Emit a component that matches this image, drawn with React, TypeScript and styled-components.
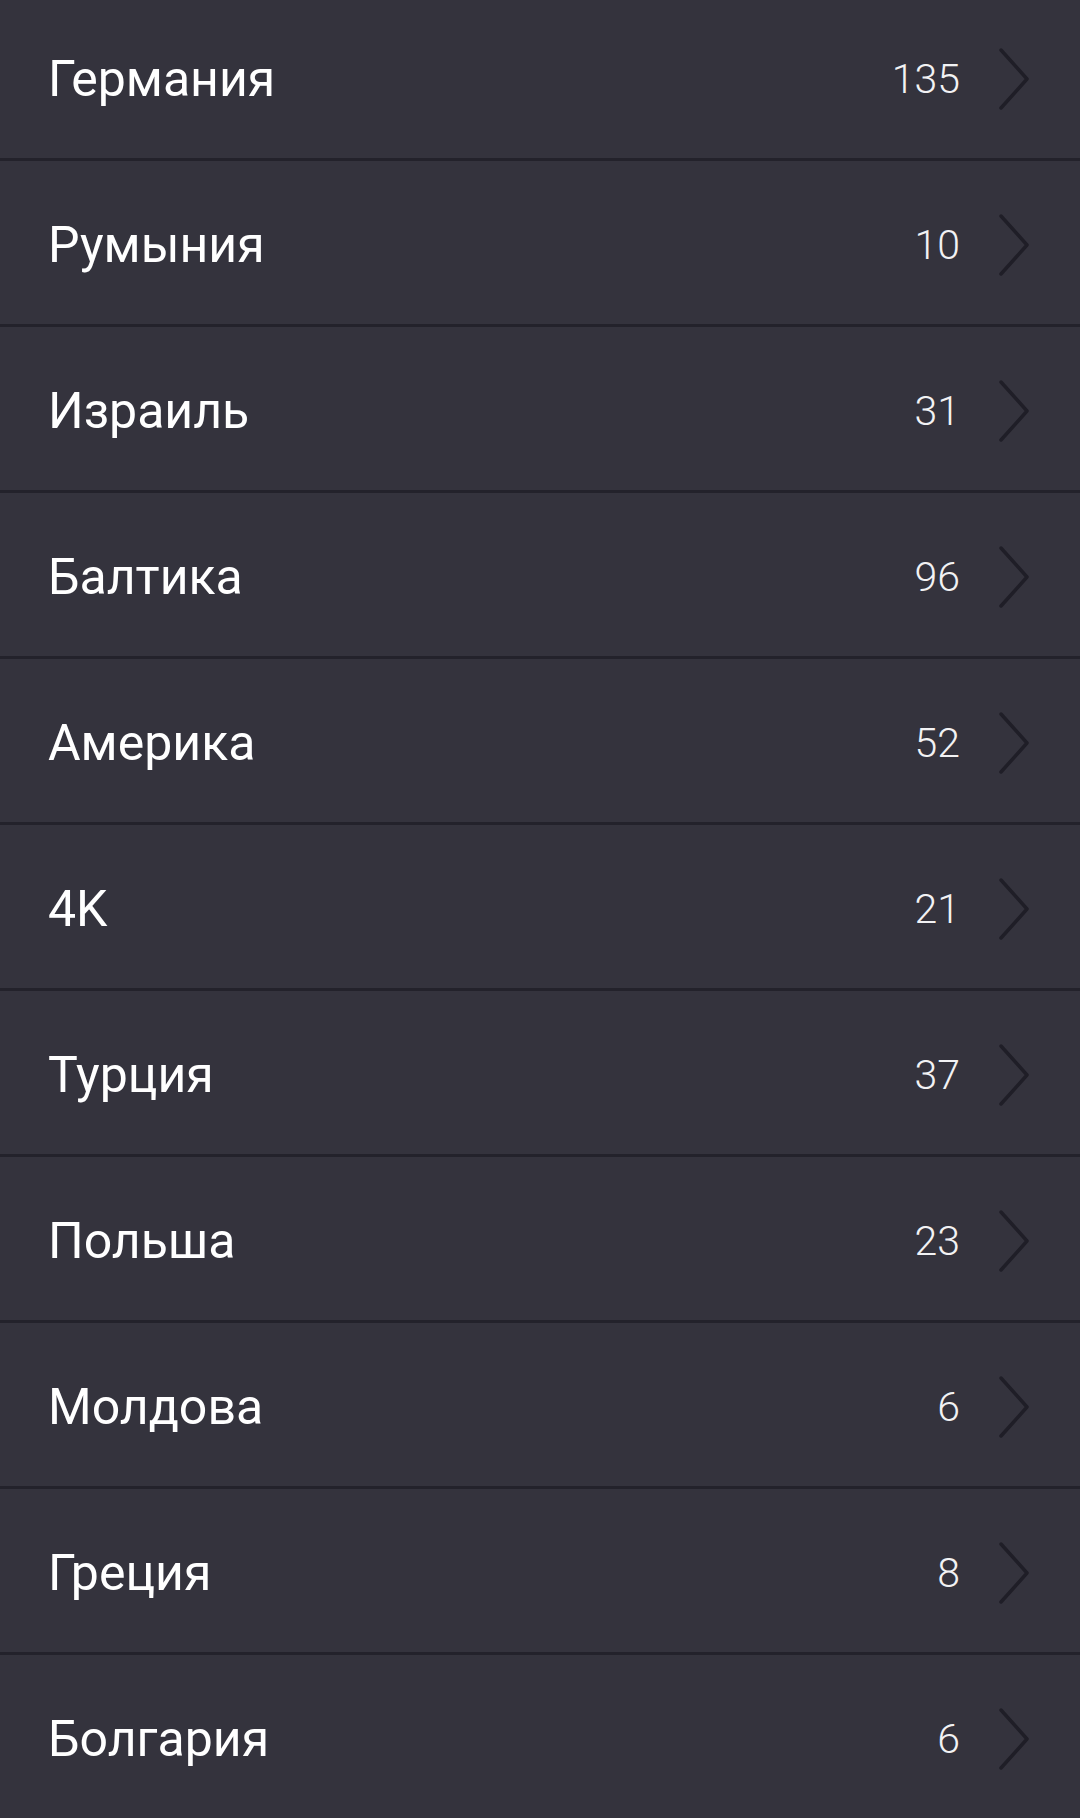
import React from "react";
import styled, { createGlobalStyle } from "styled-components";

const GlobalStyle = createGlobalStyle`
  html, body {
    margin: 0;
    padding: 0;
    background: #34333d;
    overflow: hidden;
  }
  body {
    font-family: Roboto, "Noto Sans", sans-serif;
  }
`;

const List = styled.ul`
  list-style: none;
  margin: -5px 0 0;
  padding: 0;
  height: 1823px;
  overflow: hidden;
  background: #34333d;
`;

const Row = styled.li`
  display: flex;
  align-items: center;
  box-sizing: border-box;
  height: 166px;
  padding: 4px 50px 0 48px;
  border-bottom: 3px solid #23222b;
`;

const Title = styled.span`
  flex: 1;
  color: #ffffff;
  font-size: 50px;
  font-weight: 400;
`;

const Count = styled.span`
  color: #f2f2f4;
  font-size: 41px;
  font-weight: 300;
  margin-right: 38px;
`;

const Chevron = () => (
  <svg width="32" height="64" viewBox="0 0 32 64" fill="none">
    <polyline
      points="3,3 29,32 3,61"
      stroke="#1f1e27"
      strokeWidth="3.5"
      strokeLinecap="round"
      strokeLinejoin="round"
    />
  </svg>
);

const countries: [string, number][] = [
  ["Германия", 135],
  ["Румыния", 10],
  ["Израиль", 31],
  ["Балтика", 96],
  ["Америка", 52],
  ["4K", 21],
  ["Турция", 37],
  ["Польша", 23],
  ["Молдова", 6],
  ["Греция", 8],
  ["Болгария", 6],
];

export default function App() {
  return (
    <>
      <GlobalStyle />
      <List>
        {countries.map(([name, count]) => (
          <Row key={name}>
            <Title>{name}</Title>
            <Count>{count}</Count>
            <Chevron />
          </Row>
        ))}
      </List>
    </>
  );
}
